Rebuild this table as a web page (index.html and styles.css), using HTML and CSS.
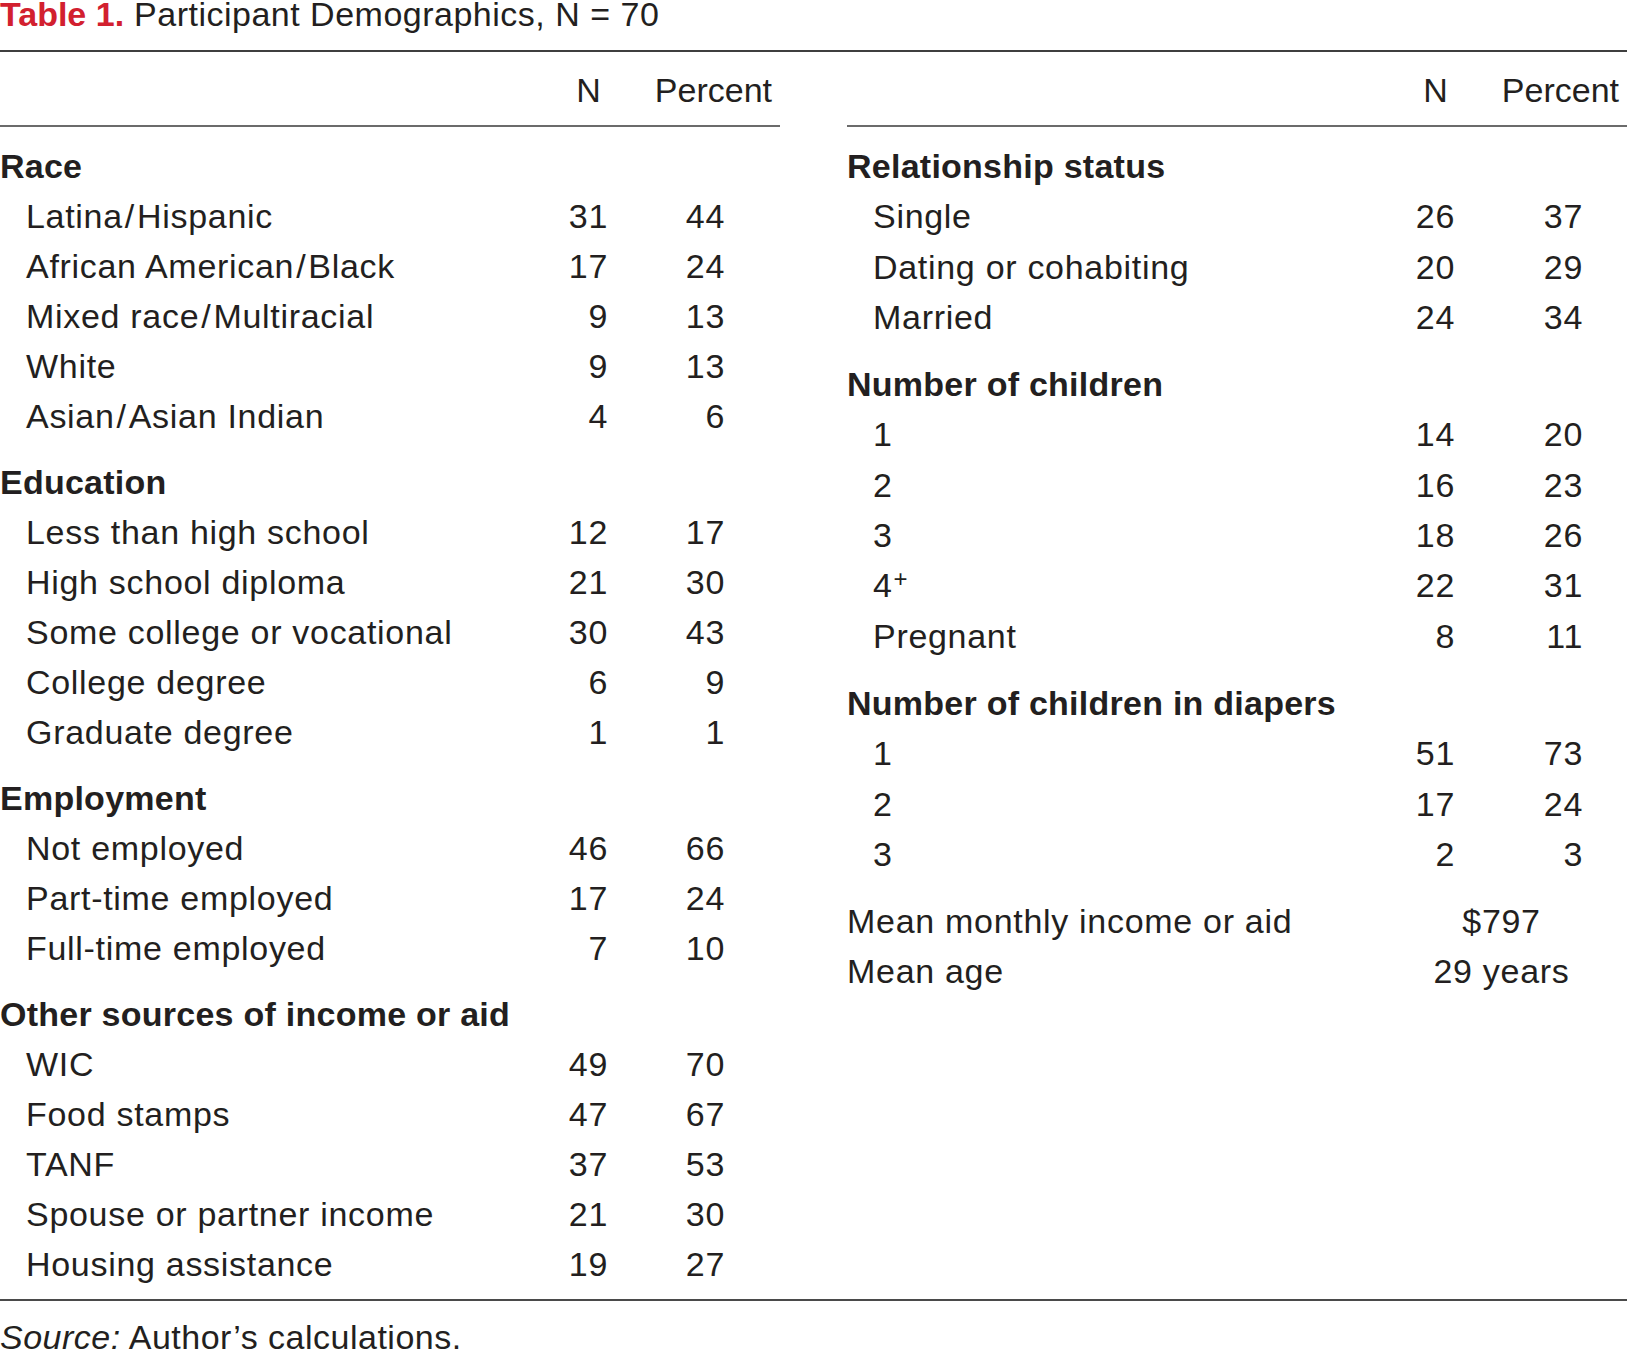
FILE: index.html
```html
<!DOCTYPE html>
<html lang="en">
<head>
<meta charset="utf-8">
<title>Table 1. Participant Demographics</title>
<link rel="stylesheet" href="styles.css">
</head>
<body>
<h1 class="title"><span class="title-num">Table 1.</span> Participant Demographics, N = 70</h1>
<div class="tables">
  <section class="panel panel-left">
    <div class="head"><span class="hn">N</span><span class="hp">Percent</span></div>
    <div class="body">
      <div class="group">
        <div class="gtitle">Race</div>
        <div class="row"><span class="lbl">Latina<span class="sl">/</span>Hispanic</span><span class="n">31</span><span class="p">44</span></div>
        <div class="row"><span class="lbl">African American<span class="sl">/</span>Black</span><span class="n">17</span><span class="p">24</span></div>
        <div class="row"><span class="lbl">Mixed race<span class="sl">/</span>Multiracial</span><span class="n">9</span><span class="p">13</span></div>
        <div class="row"><span class="lbl">White</span><span class="n">9</span><span class="p">13</span></div>
        <div class="row"><span class="lbl">Asian<span class="sl">/</span>Asian Indian</span><span class="n">4</span><span class="p">6</span></div>
      </div>
      <div class="group">
        <div class="gtitle">Education</div>
        <div class="row"><span class="lbl">Less than high school</span><span class="n">12</span><span class="p">17</span></div>
        <div class="row"><span class="lbl">High school diploma</span><span class="n">21</span><span class="p">30</span></div>
        <div class="row"><span class="lbl">Some college or vocational</span><span class="n">30</span><span class="p">43</span></div>
        <div class="row"><span class="lbl">College degree</span><span class="n">6</span><span class="p">9</span></div>
        <div class="row"><span class="lbl">Graduate degree</span><span class="n">1</span><span class="p">1</span></div>
      </div>
      <div class="group">
        <div class="gtitle">Employment</div>
        <div class="row"><span class="lbl">Not employed</span><span class="n">46</span><span class="p">66</span></div>
        <div class="row"><span class="lbl">Part-time employed</span><span class="n">17</span><span class="p">24</span></div>
        <div class="row"><span class="lbl">Full-time employed</span><span class="n">7</span><span class="p">10</span></div>
      </div>
      <div class="group">
        <div class="gtitle">Other sources of income or aid</div>
        <div class="row"><span class="lbl">WIC</span><span class="n">49</span><span class="p">70</span></div>
        <div class="row"><span class="lbl">Food stamps</span><span class="n">47</span><span class="p">67</span></div>
        <div class="row"><span class="lbl">TANF</span><span class="n">37</span><span class="p">53</span></div>
        <div class="row"><span class="lbl">Spouse or partner income</span><span class="n">21</span><span class="p">30</span></div>
        <div class="row row-last"><span class="lbl">Housing assistance</span><span class="n">19</span><span class="p">27</span></div>
      </div>
    </div>
  </section>
  <section class="panel panel-right">
    <div class="head"><span class="hn">N</span><span class="hp">Percent</span></div>
    <div class="body">
      <div class="group">
        <div class="gtitle">Relationship status</div>
        <div class="row"><span class="lbl">Single</span><span class="n">26</span><span class="p">37</span></div>
        <div class="row"><span class="lbl">Dating or cohabiting</span><span class="n">20</span><span class="p">29</span></div>
        <div class="row"><span class="lbl">Married</span><span class="n">24</span><span class="p">34</span></div>
      </div>
      <div class="group">
        <div class="gtitle">Number of children</div>
        <div class="row"><span class="lbl">1</span><span class="n">14</span><span class="p">20</span></div>
        <div class="row"><span class="lbl">2</span><span class="n">16</span><span class="p">23</span></div>
        <div class="row"><span class="lbl">3</span><span class="n">18</span><span class="p">26</span></div>
        <div class="row"><span class="lbl">4<sup class="sup">+</sup></span><span class="n">22</span><span class="p">31</span></div>
        <div class="row"><span class="lbl">Pregnant</span><span class="n">8</span><span class="p">11</span></div>
      </div>
      <div class="group">
        <div class="gtitle">Number of children in diapers</div>
        <div class="row"><span class="lbl">1</span><span class="n">51</span><span class="p">73</span></div>
        <div class="row"><span class="lbl">2</span><span class="n">17</span><span class="p">24</span></div>
        <div class="row"><span class="lbl">3</span><span class="n">2</span><span class="p">3</span></div>
      </div>
      <div class="group">
        <div class="row row-mean"><span class="lbl">Mean monthly income or aid</span><span class="val">$797</span></div>
        <div class="row row-mean"><span class="lbl">Mean age</span><span class="val">29 years</span></div>
      </div>
    </div>
  </section>
</div>
<p class="source"><em>Source:</em> Author’s calculations.</p>
</body>
</html>
```

FILE: styles.css
```css
html, body {
  margin: 0;
  padding: 0;
  background: #ffffff;
}

body {
  width: 1627px;
  font-family: "Liberation Sans", Arial, sans-serif;
  font-size: 34px;
  color: #231f20;
}

.title {
  margin: 0 0 22px 0;
  font-size: 34px;
  font-weight: 400;
  line-height: 28px;
  letter-spacing: 0.5px;
  white-space: nowrap;
}

.title-num {
  color: #d2202f;
  font-weight: 700;
  letter-spacing: 0;
}

.tables {
  display: flex;
  gap: 67px;
  border-top: 2px solid #3f3f3f;
  border-bottom: 2px solid #4a4a4a;
}

.panel {
  width: 780px;
  flex: 0 0 780px;
  display: flex;
  flex-direction: column;
}

.head {
  display: flex;
  justify-content: flex-end;
  padding: 13px 8px 10px 0;
  line-height: 50px;
  border-bottom: 2px solid #6b6b6b;
}

.hn {
  margin-right: 54px;
}

.body {
  padding: 14px 0 9px 0;
}

.group + .group {
  margin-top: 16px;
}

.panel-right .group + .group {
  margin-top: 17px;
}

.gtitle {
  font-weight: 700;
  line-height: 50px;
  letter-spacing: 0.25px;
  white-space: nowrap;
}

.row {
  display: grid;
  grid-template-columns: 1fr 80px 117px;
  padding-right: 55px;
  line-height: 50px;
  letter-spacing: 0.7px;
}

.row-last {
  line-height: 51px;
}

.panel-right .row {
  grid-template-columns: 1fr 80px 128px;
  padding-right: 44px;
}

.panel-right .row,
.panel-right .gtitle {
  line-height: 50.3px;
}

.lbl {
  padding-left: 26px;
  white-space: nowrap;
}

.sl {
  margin: 0 2px;
}

.n,
.p {
  text-align: right;
}

.sup {
  font-size: 24px;
  line-height: 0;
  vertical-align: 10px;
  margin-left: 1px;
}

.row-mean .lbl {
  padding-left: 0;
}

.row-mean .val {
  grid-column: 2 / 4;
  text-align: center;
  padding-left: 45px;
}

.source {
  margin: 21px 0 0 0;
  line-height: 30px;
  letter-spacing: 0.5px;
}
```
